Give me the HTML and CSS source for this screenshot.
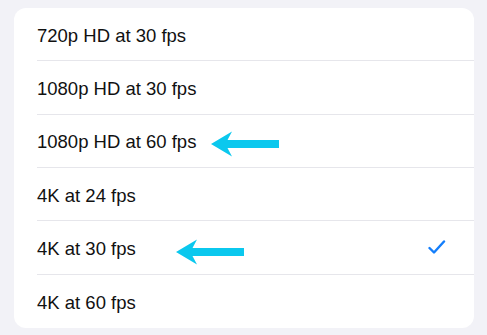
FILE: index.html
```html
<!DOCTYPE html>
<html lang="en">
<head>
    <meta charset="UTF-8">
    <meta name="viewport" content="width=device-width, initial-scale=1.0">
    <title>Record Video</title>
    <link rel="stylesheet" href="styles.css">
</head>
<body>

    <!-- Danh sách độ phân giải -->
    <ul class="card">
        <li class="row"><div class="cell">720p HD at 30 fps</div></li>
        <li class="row"><div class="cell">1080p HD at 30 fps</div></li>
        <li class="row">
            <div class="cell">1080p HD at 60 fps</div>
            <svg class="arrow arrow-first" width="68" height="26" viewBox="0 0 68 26">
                <path d="M0 13 L21 0.5 L16.5 9 L68 9 L68 17 L16.5 17 L21 25.5 Z" />
            </svg>
        </li>
        <li class="row"><div class="cell">4K at 24 fps</div></li>
        <li class="row">
            <div class="cell">4K at 30 fps
                <svg class="check" width="18" height="15" viewBox="0 0 18 15">
                    <polyline points="1.5,8 6,12.5 16,1.5" />
                </svg>
            </div>
            <svg class="arrow arrow-second" width="68" height="26" viewBox="0 0 68 26">
                <path d="M0 13 L21 0.5 L16.5 9 L68 9 L68 17 L16.5 17 L21 25.5 Z" />
            </svg>
        </li>
        <li class="row"><div class="cell">4K at 60 fps</div></li>
    </ul>

</body>
</html>
```

FILE: styles.css
```css
body {
    margin: 0;
    padding: 8px 13px 7px 14px;
    background-color: #f2f2f7;
    font-family: "Liberation Sans", Arial, sans-serif;
}

/* Khung danh sách */
.card {
    list-style: none;
    margin: 0;
    padding: 0;
    background-color: #fff;
    border-radius: 12px;
    overflow: hidden;
}

.row {
    position: relative;
    height: 53.33px;
    padding-left: 23px;
}

.cell {
    display: flex;
    align-items: center;
    height: 100%;
    box-sizing: border-box;
    padding: 3px 28px 0 0;
    border-bottom: 1px solid #e6e6eb;
    font-size: 18.5px;
    color: #111;
}

.row:last-child .cell {
    border-bottom: none;
}

/* Dấu tích */
.check {
    margin-left: auto;
    margin-top: -3px;
    fill: none;
    stroke: #147efb;
    stroke-width: 2.4;
    stroke-linecap: round;
    stroke-linejoin: round;
}

/* Mũi tên chú thích */
.arrow {
    position: absolute;
    fill: #0bc8ee;
}

.arrow-first {
    left: 197px;
    top: 16px;
}

.arrow-second {
    left: 162px;
    top: 18px;
}
```
